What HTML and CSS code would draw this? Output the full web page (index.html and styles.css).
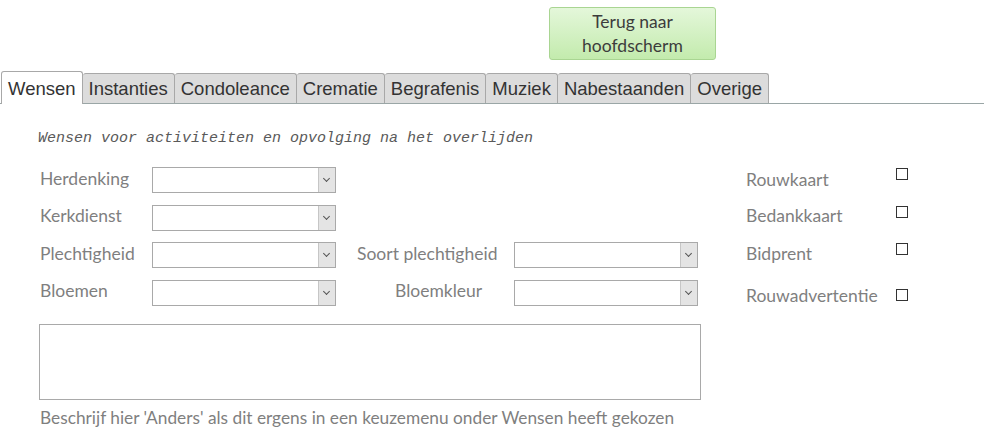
FILE: index.html
```html
<!DOCTYPE html>
<html lang="nl">
<head>
    <meta charset="UTF-8">
    <meta name="viewport" content="width=device-width, initial-scale=1.0">
    <title>Wensen</title>
    <link rel="stylesheet" href="styles.css">
</head>
<body>
    <div class="topbar">
        <button class="back-btn">Terug naar<br>hoofdscherm</button>
    </div>

    <div class="tabs">
        <div class="tab active">Wensen</div>
        <div class="tab">Instanties</div>
        <div class="tab">Condoleance</div>
        <div class="tab">Crematie</div>
        <div class="tab">Begrafenis</div>
        <div class="tab">Muziek</div>
        <div class="tab">Nabestaanden</div>
        <div class="tab">Overige</div>
    </div>

    <div class="panel">
        <div class="main-col">
            <h2 class="section-title">Wensen voor activiteiten en opvolging na het overlijden</h2>

            <div class="form-grid">
                <label class="lbl">Herdenking</label>
                <div class="combo"><span class="arrow"></span></div>
                <span></span><span></span>

                <label class="lbl">Kerkdienst</label>
                <div class="combo"><span class="arrow"></span></div>
                <span></span><span></span>

                <label class="lbl">Plechtigheid</label>
                <div class="combo"><span class="arrow"></span></div>
                <label class="lbl lbl-soort">Soort plechtigheid</label>
                <div class="combo"><span class="arrow"></span></div>

                <label class="lbl">Bloemen</label>
                <div class="combo"><span class="arrow"></span></div>
                <label class="lbl lbl-kleur">Bloemkleur</label>
                <div class="combo"><span class="arrow"></span></div>
            </div>

            <div class="memo"></div>
            <p class="hint">Beschrijf hier 'Anders' als dit ergens in een keuzemenu onder Wensen heeft gekozen</p>
        </div>

        <div class="side-col">
            <div class="check-row"><span class="lbl">Rouwkaart</span><span class="box b1"></span></div>
            <div class="check-row"><span class="lbl">Bedankkaart</span><span class="box"></span></div>
            <div class="check-row"><span class="lbl">Bidprent</span><span class="box b3"></span></div>
            <div class="check-row"><span class="lbl">Rouwadvertentie</span><span class="box b4"></span></div>
        </div>
    </div>
</body>
</html>
```

FILE: styles.css
```css
body {
    margin: 0;
    background: #fff;
    font-family: Lato, "Open Sans", sans-serif;
}
.topbar {
    height: 71px;
}
.back-btn {
    margin: 7px 0 0 549px;
    width: 167px;
    height: 53px;
    border: 1px solid #a9d592;
    border-radius: 3px;
    background: linear-gradient(#e4f7da 0%, #c3ebad 100%);
    color: #3c3c3c;
    font-family: Lato, "Open Sans", sans-serif;
    font-size: 17.5px;
    line-height: 24px;
    padding: 0;
}
.tabs {
    display: flex;
    align-items: flex-end;
    height: 32px;
    padding-left: 1px;
    border-bottom: 1px solid #9aa6a6;
}
.tab {
    font-family: "Liberation Sans", Arial, sans-serif;
    font-size: 18.5px;
    color: #333;
    height: 29px;
    line-height: 30px;
    padding: 0 6px;
    background: #dcdcdc;
    border: 1px solid #a8a8a8;
    border-bottom: none;
    border-left: none;
    border-radius: 3px 3px 0 0;
}
.tab.active {
    background: #fff;
    height: 32px;
    margin-bottom: -1px;
    line-height: 33px;
    border-left: 1px solid #a8a8a8;
}
.panel {
    display: flex;
}
.main-col {
    width: 664px;
    padding-left: 38px;
}
.section-title {
    margin: 25px 0 0;
    font-family: "Liberation Mono", monospace;
    font-style: italic;
    font-weight: normal;
    font-size: 15px;
    line-height: 20px;
    color: #5a5a5a;
}
.form-grid {
    margin-top: 18px;
    display: grid;
    grid-template-columns: 114px 184px 178px 184px;
    grid-auto-rows: 26px;
    row-gap: 11.5px;
    align-items: center;
}
.lbl {
    font-size: 17.5px;
    line-height: 20px;
    color: #7f7f7f;
    padding-left: 2px;
    margin-top: -3px;
}
.lbl-soort {
    padding-left: 21px;
}
.lbl-kleur {
    padding-left: 59px;
}
.combo {
    height: 24px;
    border: 1px solid #a9a9a9;
    display: flex;
    justify-content: flex-end;
}
.arrow {
    width: 16px;
    background: #e4e4e4;
    border-left: 1px solid #c6c6c6;
    position: relative;
}
.arrow::after {
    content: "";
    position: absolute;
    left: 5px;
    top: 8px;
    width: 4px;
    height: 4px;
    border-right: 1px solid #555;
    border-bottom: 1px solid #555;
    transform: rotate(45deg);
}
.memo {
    margin: 18px 0 0 1px;
    width: 660px;
    height: 74px;
    border: 1px solid #a9a9a9;
}
.hint {
    margin: 8px 0 0 2px;
    font-size: 17.3px;
    line-height: 20px;
    color: #7f7f7f;
}
.side-col {
    padding-left: 44px;
    padding-top: 66px;
    display: grid;
    grid-template-rows: 36px 38px 42px 20px;
    align-content: start;
}
.check-row {
    display: flex;
    align-items: flex-start;
}
.check-row .lbl {
    width: 150px;
    padding-left: 0;
    margin-top: 0;
}
.box {
    width: 10px;
    height: 10px;
    border: 1px solid #333;
}
.box.b1 {
    margin-top: -2px;
}
.box.b3 {
    margin-top: -1px;
}
.box.b4 {
    margin-top: 3px;
}
```
